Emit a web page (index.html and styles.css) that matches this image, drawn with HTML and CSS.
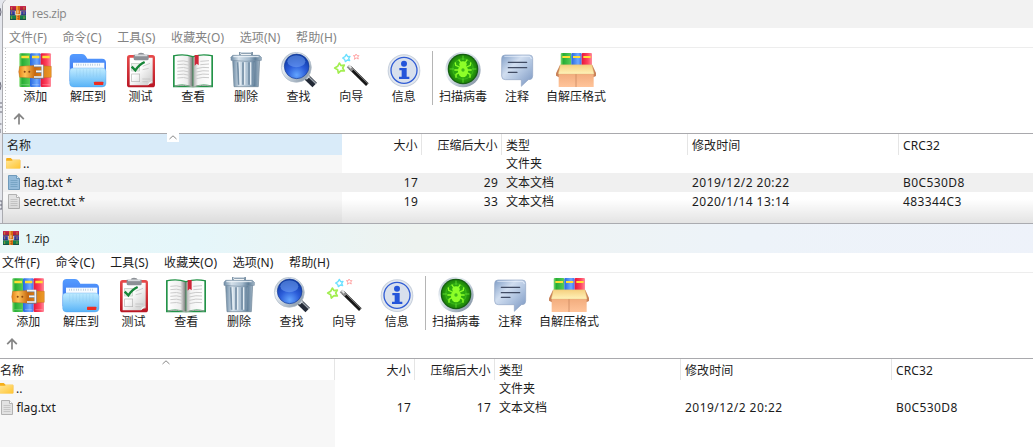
FILE: index.html
```html
<!DOCTYPE html>
<html lang="zh-CN">
<head>
<meta charset="utf-8">
<title>WinRAR</title>
<link rel="stylesheet" href="styles.css">
</head>
<body>
<svg class="defs" aria-hidden="true">
  <defs>
    <linearGradient id="gG"><stop offset="0" stop-color="#7edc70"/><stop offset=".25" stop-color="#27ae35"/><stop offset="1" stop-color="#58cc59"/></linearGradient>
    <linearGradient id="gB"><stop offset="0" stop-color="#2768df"/><stop offset=".65" stop-color="#6daaff"/><stop offset="1" stop-color="#3e70ef"/></linearGradient>
    <linearGradient id="gR"><stop offset="0" stop-color="#e81538"/><stop offset=".6" stop-color="#ff4460"/><stop offset="1" stop-color="#ff8c9c"/></linearGradient>
    <linearGradient id="gBelt"><stop offset="0" stop-color="#e48119"/><stop offset=".2" stop-color="#ffc356"/><stop offset=".5" stop-color="#c66810"/><stop offset="1" stop-color="#ed9a26"/></linearGradient>
    <linearGradient id="gFold" x2="0" y2="1"><stop offset="0" stop-color="#c1ecff"/><stop offset="1" stop-color="#58b3f7"/></linearGradient>
    <linearGradient id="gBack" x2="0" y2="1"><stop offset="0" stop-color="#559cff"/><stop offset="1" stop-color="#3266e8"/></linearGradient>
    <linearGradient id="gRed" x2="0" y2="1"><stop offset="0" stop-color="#e84b4b"/><stop offset="1" stop-color="#b91624"/></linearGradient>
    <linearGradient id="gPaper" x2="1" y2="1"><stop offset=".4" stop-color="#fff"/><stop offset="1" stop-color="#c6c6c6"/></linearGradient>
    <linearGradient id="gPageL"><stop offset="0" stop-color="#fff"/><stop offset=".7" stop-color="#eee"/><stop offset="1" stop-color="#777"/></linearGradient>
    <linearGradient id="gPageR"><stop offset="0" stop-color="#aaa"/><stop offset=".25" stop-color="#f4f4f4"/><stop offset="1" stop-color="#fff"/></linearGradient>
    <linearGradient id="gBin"><stop offset="0" stop-color="#6d8ba5"/><stop offset=".25" stop-color="#d4e0ea"/><stop offset=".6" stop-color="#a4bacd"/><stop offset=".8" stop-color="#5f7e99"/><stop offset="1" stop-color="#a4b7c7"/></linearGradient>
    <linearGradient id="gSilver" x2="1" y2="1"><stop offset="0" stop-color="#8fa0b2"/><stop offset=".3" stop-color="#eef3f8"/><stop offset=".6" stop-color="#bdc9d5"/><stop offset="1" stop-color="#718294"/></linearGradient>
    <radialGradient id="gLens" cx=".5" cy=".85" r=".8"><stop offset="0" stop-color="#63a5ff"/><stop offset=".5" stop-color="#2b5cd8"/><stop offset="1" stop-color="#0b37a3"/></radialGradient>
    <radialGradient id="gScan"><stop offset="0" stop-color="#33ba12"/><stop offset=".7" stop-color="#2aa30e"/><stop offset="1" stop-color="#1d8209"/></radialGradient>
    <linearGradient id="gNote" x2="1" y2="1"><stop offset="0" stop-color="#7f9dc6"/><stop offset=".35" stop-color="#d1def0"/><stop offset=".6" stop-color="#b0c4e0"/><stop offset="1" stop-color="#7793bf"/></linearGradient>
    <linearGradient id="gFlap" x2="0" y2="1"><stop offset="0" stop-color="#f5cf7e"/><stop offset="1" stop-color="#fff2b9"/></linearGradient>
    <linearGradient id="gBox" x2="0" y2="1"><stop offset="0" stop-color="#f0a878"/><stop offset="1" stop-color="#ffc49a"/></linearGradient>
    <linearGradient id="gYel" x2="1" y2="1"><stop offset="0" stop-color="#ffe69a"/><stop offset="1" stop-color="#ffc531"/></linearGradient>
  </defs>

  <symbol id="add" viewBox="0 0 120 108">
    <rect x="13" y="4" width="33" height="101" rx="3" fill="url(#gG)"/>
    <rect x="45" y="4" width="32" height="101" rx="3" fill="url(#gB)"/>
    <rect x="77" y="4" width="31" height="101" rx="3" fill="url(#gR)"/>
    <path d="M19 15h23M51 15h22M82 15h22" stroke="#ffdf34" stroke-width="7"/>
    <path d="M19 98h24M51 98h22M82 98h22" stroke="#fff" stroke-opacity=".25" stroke-width="3"/>
    <path d="M14 43Q60 38 109 43V76Q60 81 14 76L11 59Z" fill="url(#gBelt)" stroke="#b3601a" stroke-width="1"/>
    <g fill="#8a4612"><circle cx="29" cy="59" r="3"/><circle cx="43" cy="59" r="3"/></g>
    <path d="M57 42H82V76H57M63 59H79" fill="none" stroke="#737a82" stroke-width="8"/>
    <path d="M57 41H82V75H57M63 58H79" fill="none" stroke="#f4f4f4" stroke-width="5"/>
  </symbol>
  <symbol id="extract" viewBox="0 0 120 108">
    <path d="M5 18Q5 6 17 6H42Q49 6 53 12L58 20H102Q114 20 114 32V88H5Z" fill="url(#gBack)"/>
    <path d="M15 32H109V70H15Z" fill="#f6fbff"/>
    <path d="M24 38H100" stroke="#a8bed4" stroke-width="6" stroke-dasharray="2 5"/>
    <path d="M5 58Q5 48 15 48H103Q114 48 114 58V94Q114 105 102 105H17Q5 105 5 94Z" fill="url(#gFold)" stroke="#4c9cec" stroke-width="1"/>
    <path d="M26 51V74M36 51V74M46 51V74M56 51V74M66 51V74M76 51V74M86 51V74M96 51V74" stroke="#85bde6" stroke-opacity=".4" stroke-width="2"/>
    <rect x="78" y="89" width="28" height="10" rx="2" fill="#ee2c20"/>
  </symbol>
  <symbol id="test" viewBox="0 0 120 108">
    <rect x="18" y="9" width="84" height="97" rx="8" fill="url(#gRed)"/>
    <path d="M26 17H95V94Q85 94 81 100H26Z" fill="url(#gPaper)"/>
    <path d="M38 8H50Q51 2 60 2T72 8H83V20Q83 25 78 25H43Q38 25 38 20Z" fill="#8c9096"/>
    <path d="M42 10H79" stroke="#d7dadd" stroke-width="5"/>
    <rect x="32" y="34" width="23" height="23" fill="#eef3ee" stroke="#bac5bc" stroke-width="2"/>
    <path d="M32 44L43 55Q54 38 71 30" fill="none" stroke="#168638" stroke-width="7"/>
    <path d="M65 43L87 34M65 53L83 49M64 81H88M64 89H80" stroke="#bbb" stroke-width="2"/>
    <rect x="32" y="66" width="24" height="23" fill="none" stroke="#b5b5b5" stroke-width="2"/>
    <path d="M81 100Q81 90 95 87Z" fill="#fafafa"/>
  </symbol>
  <symbol id="view" viewBox="0 0 120 108">
    <path d="M0 10Q32 3 60 12Q88 3 120 10V106H0Z" fill="#239348"/>
    <path d="M5 13Q35 7 59 16V104Q36 94 5 100Z" fill="url(#gPageL)"/>
    <path d="M61 16Q84 7 115 13V100Q83 94 61 104Z" fill="url(#gPageR)"/>
    <path d="M5 102Q37 97 60 105Q83 97 115 102" fill="none" stroke="#aaa" stroke-width="3"/>
    <path d="M13 28Q32 24 49 30M13 38Q32 34 49 40M13 48Q32 44 49 50M13 58Q32 54 49 60M13 68Q32 64 49 70M13 78Q32 74 49 80M82 28L108 26M82 38L108 36M70 50Q90 44 108 47M70 60Q90 54 108 57M70 70Q90 64 108 67M70 80Q90 74 108 77" fill="none" stroke="#cbcbcb" stroke-width="3"/>
    <path d="M65 9H77V40L71 35L65 41Z" fill="#cf2638"/>
  </symbol>
  <symbol id="delete" viewBox="0 0 120 108">
    <path d="M42 10V3H78V10" fill="none" stroke="#8096a9" stroke-width="6"/>
    <path d="M44 7V2H76" fill="none" stroke="#dce4eb" stroke-width="3"/>
    <path d="M20 24H101L97 104H24Z" fill="url(#gBin)" stroke="#6d8396" stroke-width="2"/>
    <path d="M35 31L38 98M51 31V98M69 31V98M85 31L82 98" stroke="#7690a7" stroke-width="5"/>
    <path d="M40 31L43 98M56 31V98M74 31V98" stroke="#e5edf3" stroke-width="4"/>
    <path d="M20 10H100L106 16V25Q60 31 15 25V16Z" fill="url(#gBin)" stroke="#7890a4" stroke-width="2"/>
    <path d="M22 14H98" stroke="#eef4f9" stroke-width="3"/>
  </symbol>
  <symbol id="find" viewBox="0 0 120 108">
    <path d="M80 73L107 99" stroke="#222936" stroke-width="19"/>
    <path d="M83 68L111 95" stroke="#a0a8b0" stroke-width="4"/>
    <path d="M78 69L88 79" stroke="#d6dce3" stroke-width="13"/>
    <circle cx="52" cy="46" r="45" fill="url(#gSilver)" stroke="#b0bcc8" stroke-width="2"/>
    <circle cx="53" cy="43" r="37" fill="url(#gLens)" stroke="#173d93" stroke-width="2"/>
    <ellipse cx="52" cy="28" rx="27" ry="18" fill="#79a9f6" opacity=".5"/>
  </symbol>
  <symbol id="wizard" viewBox="0 0 120 108">
    <path d="M57 47L109 98" stroke="#171717" stroke-width="11"/>
    <path d="M59 44L111 95" stroke="#848484" stroke-width="3"/>
    <path d="M51 42L65 55" stroke="#888" stroke-width="11"/>
    <path d="M53 40L61 48" stroke="#e3e3e3" stroke-width="6"/>
    <g fill="#fff" stroke-linejoin="round">
      <path d="M25 33L30 41L40 39L35 48L40 57L30 56L22 63L20 53L11 48L20 43Z" stroke="#a2ee50" stroke-width="5"/>
      <path d="M46 7L50 14L57 13L53 19L56 26L49 24L43 29L41 22L35 18L42 14Z" stroke="#6be0ff" stroke-width="4"/>
      <path d="M75 6L78 11L84 11L80 15L82 21L76 18L70 22L72 15L67 11L73 11Z" stroke="#ff9a9a" stroke-width="2.500"/>
    </g>
  </symbol>
  <symbol id="info" viewBox="0 0 120 108">
    <circle cx="60" cy="56" r="49" fill="#c7d0dc"/>
    <circle cx="60" cy="56" r="46" fill="#e4e9f0"/>
    <circle cx="60" cy="55" r="39" fill="#d8e0ed" stroke="#305cd4" stroke-width="4"/>
    <circle cx="60" cy="35" r="9" fill="#2455da"/>
    <path d="M46 48H68V74H76V81H45V74H53V55H46Z" fill="#2455da"/>
  </symbol>
  <symbol id="scan" viewBox="0 0 120 108">
    <circle cx="60" cy="53" r="53" fill="url(#gSilver)"/>
    <circle cx="60" cy="51" r="46" fill="#155e13"/>
    <circle cx="60" cy="51" r="42" fill="url(#gScan)"/>
    <circle cx="60" cy="51" r="31" fill="none" stroke="#4ccb23" stroke-width="1.500"/>
    <path d="M60 11V24M60 79V92M20 51H33M87 51H100" stroke="#58d52a" stroke-width="3"/>
    <g fill="none" stroke="#8dff28" stroke-width="4"><path d="M53 31L47 23M67 31L73 23M49 45L38 40L37 31M71 45L82 40L83 31M47 54H34M73 54H86M49 61L39 67V77M71 61L81 67V77"/></g>
    <ellipse cx="60" cy="37" rx="11" ry="9" fill="#8dff28"/><ellipse cx="60" cy="57" rx="15" ry="19" fill="#8dff28"/>
    <circle cx="60" cy="54" r="5" fill="#43bb1b"/>
  </symbol>
  <symbol id="comment" viewBox="0 0 120 108">
    <path d="M24 9H97Q107 9 107 19V72Q107 83 96 83H94L73 103V83H25Q14 83 14 72V20Q14 9 24 9Z" fill="url(#gNote)" stroke="#8fa5c4" stroke-width="2"/>
    <path d="M22 13H96Q102 13 103 21" fill="none" stroke="#edf4ff" stroke-width="3" opacity=".7"/>
    <path d="M34 31H89M34 47H89M34 61H60" stroke="#414c64" stroke-width="4" stroke-linecap="round"/>
  </symbol>
  <symbol id="sfx" viewBox="0 0 120 108">
    <rect x="14" y="3" width="32" height="46" rx="3" fill="url(#gG)"/><rect x="46" y="3" width="31" height="46" rx="3" fill="url(#gB)"/><rect x="77" y="3" width="31" height="46" rx="3" fill="url(#gR)"/>
    <path d="M19 15H42M51 15H73M82 15H104" stroke="#ffdf34" stroke-width="6"/>
    <path d="M12 39L-3 70L9 76L20 58Z" fill="#c98258"/><path d="M109 39L123 70L112 76L100 58Z" fill="#c98258"/>
    <rect x="8" y="58" width="105" height="47" fill="url(#gBox)"/>
    <path d="M60 66V105" stroke="#c28059" stroke-width="2"/>
    <path d="M13 38H108L114 66H7Z" fill="url(#gFlap)" stroke="#ddb573" stroke-width="1"/>
  </symbol>
  <symbol id="app" viewBox="0 0 48 42">
    <path fill="#b91f3d" d="M0 0h48v13H0z"/><path fill="#303ca4" d="M0 14h48v13H0z"/><path fill="#13804c" d="M0 28h48v14H0z"/>
    <path d="M0 2h48M0 16h48" stroke="#ed4d83" stroke-opacity=".5" stroke-width="2"/><path d="M0 13h48M0 27h48M0 40h48" stroke="#202e48" stroke-width="2"/>
    <path d="M5 3v8M42 3v8M5 17v8M42 17v8M5 31v8M42 31v8" stroke="#d6b53b" stroke-width="2"/>
    <path fill="#d56b13" d="M18 0h12v42H18z"/><path d="M21 0v42" stroke="#ffc052" stroke-width="3"/>
    <path d="M16 15v11h16V15M24 13v9" fill="none" stroke="#edddb7" stroke-width="3"/><path d="M24 30v2M24 36v2" stroke="#733712" stroke-width="3"/>
  </symbol>
  <symbol id="folder" viewBox="0 0 16 13"><path d="M0 1Q0 0 1 0H5L7 2H15Q15.500 2 15.500 3V11H0Z" fill="#f5ae18"/><path d="M0 3H6L8 2H15V11.500H0Z" fill="url(#gYel)"/></symbol>
  <symbol id="file" viewBox="0 0 12 15"><path d="M.5.5H8.500L11.500 3.500V14.500H.5Z" fill="#e2e2e2" stroke="#b2b2b2"/><path d="M8.500.5V3.500H11.500" fill="#fff" stroke="#b2b2b2"/><path d="M2.500 5.500H9.500M2.500 7.500H9.500M2.500 9.500H9.500M2.500 11.500H9.500" stroke="#c6c6c6"/></symbol>
  <symbol id="file-blue" viewBox="0 0 12 15"><path d="M.5.5H8.500L11.500 3.500V14.500H.5Z" fill="#94bbda" stroke="#6f9abb"/><path d="M8.500.5V3.500H11.500" fill="#d6e9f6" stroke="#6f9abb"/><path d="M2.500 5.500H9.500M2.500 7.500H9.500M2.500 9.500H9.500M2.500 11.500H9.500" stroke="#78a5c5"/></symbol>
  <symbol id="up" viewBox="0 0 12 12"><path d="M6 11.500V1.500M1.200 6.200L6 1.300L10.800 6.200" fill="none" stroke="#858585" stroke-width="1.700"/></symbol>
  <symbol id="sort" viewBox="0 0 8 5"><path d="M.5 4L4 .8L7.500 4" fill="none" stroke="#888"/></symbol>
</svg>

<main class="desktop">
  <svg class="behind" viewBox="0 0 3 223"><path d="M0 8Q2 12 0 16M0 82Q2 86 0 90M0 103H2M0 107H2M0 112H2M0 124H1.500M0 129V133M0 201H2V209H0M0 205H2" fill="none" stroke="#686977"/></svg>
  <section class="window inactive">
    <header class="titlebar"><svg class="app-icon"><use href="#app"/></svg><span>res.zip</span></header>
    <nav class="menu"><span>文件(F)</span><span>命令(C)</span><span>工具(S)</span><span>收藏夹(O)</span><span>选项(N)</span><span>帮助(H)</span></nav>
    <div class="toolbar">
      <div class="tool"><svg><use href="#add"/></svg>添加</div><div class="tool"><svg><use href="#extract"/></svg>解压到</div><div class="tool"><svg><use href="#test"/></svg>测试</div><div class="tool"><svg><use href="#view"/></svg>查看</div><div class="tool"><svg><use href="#delete"/></svg>删除</div><div class="tool"><svg><use href="#find"/></svg>查找</div><div class="tool"><svg><use href="#wizard"/></svg>向导</div><div class="tool"><svg><use href="#info"/></svg>信息</div>
      <i class="divider"></i>
      <div class="tool scan"><svg><use href="#scan"/></svg>扫描病毒</div><div class="tool note"><svg><use href="#comment"/></svg>注释</div><div class="tool sfx"><svg><use href="#sfx"/></svg>自解压格式</div>
    </div>
    <div class="address"><svg><use href="#up"/></svg></div>
    <div class="list">
      <div class="row head"><span class="name">名称<svg class="sort"><use href="#sort"/></svg></span><span class="num">大小</span><span class="num packed">压缩后大小</span><span class="type">类型</span><span class="date">修改时间</span><span class="crc">CRC32</span></div>
      <div class="row"><span class="name"><svg class="folder"><use href="#folder"/></svg>..</span><span class="num"></span><span class="num packed"></span><span class="type">文件夹</span><span class="date"></span><span class="crc"></span></div>
      <div class="row selected"><span class="name"><svg class="file"><use href="#file-blue"/></svg><b>flag.txt *</b></span><span class="num">17</span><span class="num packed">29</span><span class="type">文本文档</span><span class="date">2019/12/2 20:22</span><span class="crc">B0C530D8</span></div>
      <div class="row"><span class="name"><svg class="file"><use href="#file"/></svg><b>secret.txt *</b></span><span class="num">19</span><span class="num packed">33</span><span class="type">文本文档</span><span class="date">2020/1/14 13:14</span><span class="crc">483344C3</span></div>
      <div class="row filler"><span class="name"></span></div>
    </div>
  </section>
  <div class="shade"></div>
  <section class="window active">
    <header class="titlebar"><svg class="app-icon"><use href="#app"/></svg><span>1.zip</span></header>
    <nav class="menu"><span>文件(F)</span><span>命令(C)</span><span>工具(S)</span><span>收藏夹(O)</span><span>选项(N)</span><span>帮助(H)</span></nav>
    <div class="toolbar">
      <div class="tool"><svg><use href="#add"/></svg>添加</div><div class="tool"><svg><use href="#extract"/></svg>解压到</div><div class="tool"><svg><use href="#test"/></svg>测试</div><div class="tool"><svg><use href="#view"/></svg>查看</div><div class="tool"><svg><use href="#delete"/></svg>删除</div><div class="tool"><svg><use href="#find"/></svg>查找</div><div class="tool"><svg><use href="#wizard"/></svg>向导</div><div class="tool"><svg><use href="#info"/></svg>信息</div>
      <i class="divider"></i>
      <div class="tool scan"><svg><use href="#scan"/></svg>扫描病毒</div><div class="tool note"><svg><use href="#comment"/></svg>注释</div><div class="tool sfx"><svg><use href="#sfx"/></svg>自解压格式</div>
    </div>
    <div class="address"><svg><use href="#up"/></svg></div>
    <div class="list">
      <div class="row head"><span class="name">名称<svg class="sort"><use href="#sort"/></svg></span><span class="num">大小</span><span class="num packed">压缩后大小</span><span class="type">类型</span><span class="date">修改时间</span><span class="crc">CRC32</span></div>
      <div class="row"><span class="name"><svg class="folder"><use href="#folder"/></svg>..</span><span class="num"></span><span class="num packed"></span><span class="type">文件夹</span><span class="date"></span><span class="crc"></span></div>
      <div class="row"><span class="name"><svg class="file"><use href="#file"/></svg><b>flag.txt</b></span><span class="num">17</span><span class="num packed">17</span><span class="type">文本文档</span><span class="date">2019/12/2 20:22</span><span class="crc">B0C530D8</span></div>
      <div class="row filler"><span class="name"></span></div>
    </div>
  </section>
</main>
</body>
</html>
```
FILE: styles.css
```css
* { box-sizing: border-box; }
body { margin: 0; overflow: hidden; color: #1c1c1c; font: 12px/19px "Noto Sans", "Noto Sans CJK SC", sans-serif; }
svg { display: block; overflow: visible; flex: none; }
.defs { position: absolute; width: 0; height: 0; }
.desktop { position: relative; width: 1033px; height: 447px; overflow: hidden; background: #e5e7ed; }
.behind { position: absolute; left: 0; top: 0; width: 3px; height: 223px; }

/* Overlapping windows */
.window { position: absolute; width: 1060px; height: 300px; background: #fff; border: 1px solid #aaabb0; display: flex; flex-direction: column; }
.inactive { left: 2px; top: -2px; border-top-left-radius: 8px; overflow: hidden; }
.active { left: -5px; top: 223px; }
.shade { position: absolute; left: 3px; right: 0; top: 199px; height: 24px; background: linear-gradient(transparent, rgba(0, 0, 0, .11)); }

.titlebar { flex: none; height: 29px; display: flex; align-items: center; gap: 6px; padding: 0 0 1px 7px; background: #f2f2f2; font-family: "Open Sans", sans-serif; letter-spacing: -.35px; }
.app-icon { width: 16px; height: 14px; margin-top: -1px; }
.inactive .titlebar { color: #858585; letter-spacing: -.3px; }
.active .titlebar { background: linear-gradient(90deg, #e8f7f7 0, #e5f6fa 200px, #eef3f0 420px, #edf3f9 750px, #eef2fa); }
.menu { flex: none; height: 20px; display: flex; gap: 15.500px; padding-left: 6px; border-bottom: 1px solid #ededed; letter-spacing: .1px; }
.inactive .menu { color: #838383; }
.toolbar { flex: none; height: 62px; display: flex; padding: 4px 0 0 6px; }
.inactive .toolbar, .inactive .address { background: repeating-linear-gradient(#c4c4c4 0 1px, transparent 1px 3px) 2px 0 / 1px 100% no-repeat; }
.tool { flex: none; width: 52.650px; display: flex; flex-direction: column; align-items: center; line-height: 17px; white-space: nowrap; }
.tool svg { width: 40px; height: 36px; }
.divider { flex: none; width: 1px; height: 54px; margin: -1px 1px 0 2px; background: #b5b5b5; }
.scan { width: 58px; }
.note { width: 50px; }
.sfx { width: 68px; }
.address { flex: none; height: 23px; padding: 3px 0 0 10px; }
.address svg { width: 12px; height: 12px; }

.list { flex: 1; min-height: 0; display: flex; flex-direction: column; border-top: 1px solid #a9a9ad; }
.row { flex: none; height: 19px; display: grid; grid-template-columns: 339px 80px 80px 186px 211px 1fr; }
.row > span { padding: 0 4px; white-space: nowrap; }
.row .name { display: flex; align-items: center; background: #f7f7f7; }
.row b { font-weight: 400; letter-spacing: -.05px; }
.row .num { text-align: right; padding-right: 3.500px; }
.row:not(.head) .num { letter-spacing: .2px; padding-right: 4px; }
.row .date { letter-spacing: .45px; }
.row .crc { letter-spacing: .4px; }
.head { height: 20px; }
.head > span { padding-top: 2px; }
.head span:not(.crc) { border-right: 1px solid #e5e5e5; }
.head .name { position: relative; background: #fff; }
.inactive .head .name { background: #d9ebf9; border-color: #d9ebf9; }
.head .date, .head .crc { letter-spacing: .1px; }
.sort { position: absolute; left: 166px; top: 1px; width: 8px; height: 5px; }
.inactive .sort { box-shadow: 0 0 0 2px #fff; background: #fff; }
.folder { width: 15px; height: 12px; margin: 0 2px 0 -1px; }
.file { width: 12px; height: 15px; margin: 0 3.500px 0 1px; }
.selected, .selected .name { background: #f0f0f0; }
.filler { flex: 1; }
```
